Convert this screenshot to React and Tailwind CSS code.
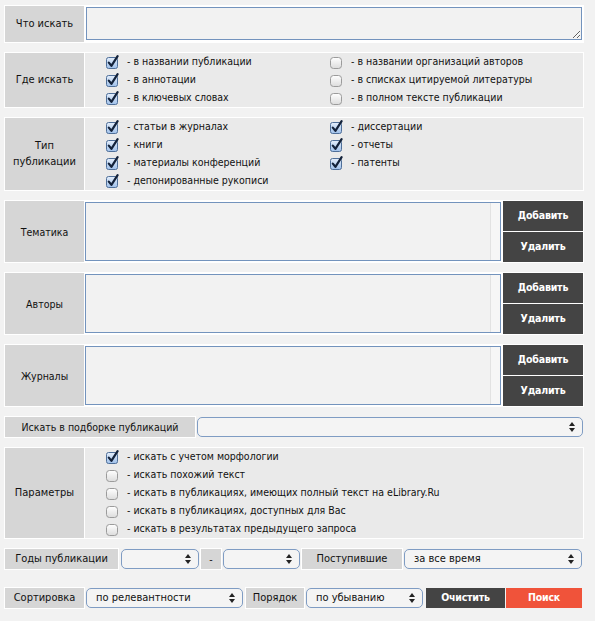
import React from 'react'

const FONT = { fontFamily: '"DejaVu Sans Condensed", "DejaVu Sans", sans-serif' }

function Check({ checked }) {
  if (checked) {
    return (
      <svg width="15" height="15" viewBox="0 0 15 15" className="shrink-0">
        <defs>
          <linearGradient id="cbOn" x1="0" y1="0" x2="0" y2="1">
            <stop offset="0" stopColor="#e4eefb" />
            <stop offset="1" stopColor="#9fc0ea" />
          </linearGradient>
        </defs>
        <rect x="0.5" y="2.5" width="11" height="11" rx="2" fill="url(#cbOn)" stroke="#4f6f99" />
        <path d="M2.8 7.6 L5.4 10.8 L11.6 1.2" fill="none" stroke="#13223a" strokeWidth="2.2" strokeLinecap="round" strokeLinejoin="round" />
      </svg>
    )
  }
  return (
    <svg width="15" height="15" viewBox="0 0 15 15" className="shrink-0">
      <defs>
        <linearGradient id="cbOff" x1="0" y1="0" x2="0" y2="1">
          <stop offset="0" stopColor="#ffffff" />
          <stop offset="1" stopColor="#dcdcdc" />
        </linearGradient>
      </defs>
      <rect x="0.5" y="2.5" width="11" height="11" rx="3" fill="url(#cbOff)" stroke="#9b9b9b" />
    </svg>
  )
}

function Item({ checked, children }) {
  return (
    <div className="flex items-center h-[18px] whitespace-nowrap">
      <Check checked={checked} />
      <span className="ml-[6px]">{children}</span>
    </div>
  )
}

function Label({ children, className = '' }) {
  return (
    <div className={`bg-[#d6d6d6] flex items-center justify-center text-center leading-[16px] ${className}`}>
      {children}
    </div>
  )
}

function Arrows() {
  return (
    <svg width="6" height="10" viewBox="0 0 6 10" className="shrink-0">
      <path d="M3 0 L6 4 L0 4 Z" fill="#222" />
      <path d="M3 10 L6 6 L0 6 Z" fill="#222" />
    </svg>
  )
}

function Select({ value = '', className = '' }) {
  return (
    <div className={`h-[20px] flex items-center justify-between border border-[#7f9cc3] rounded-[5px] bg-[#f4f4f4] pl-[9px] pr-[7px] ${className}`}>
      <span className="truncate">{value}</span>
      <Arrows />
    </div>
  )
}

function ListRow({ label }) {
  return (
    <div className="flex border border-white bg-white gap-px mb-[9px]">
      <Label className="w-[79px] h-[61px]">{label}</Label>
      <div className="flex-1 flex">
        <div className="flex-1 my-[1px] border border-[#7393bd] bg-[#f2f2f2] flex justify-end">
          <div className="w-[10px] border-l border-[#e2e2e2] bg-[#f6f6f6]" />
        </div>
        <div className="w-[80px] ml-[2px] flex flex-col gap-px bg-white">
          <button className="h-[30px] bg-[#444444] text-white font-bold tracking-[-0.2px]">Добавить</button>
          <button className="h-[30px] bg-[#444444] text-white font-bold tracking-[-0.2px]">Удалить</button>
        </div>
      </div>
    </div>
  )
}

export default function App() {
  return (
    <div className="min-h-[621px] bg-[#f2f2f2] text-[10.5px] text-[#111] pt-[5px] pl-[4px]" style={FONT}>
      <div className="w-[580px]">
        {/* Что искать */}
        <div className="flex border border-white bg-white gap-px mb-[9px]">
          <Label className="w-[79px] h-[36px] text-[11px]">Что искать</Label>
          <div className="flex-1 p-px bg-white">
            <textarea className="block w-full h-[33px] border border-[#7393bd] bg-[#f2f2f2] resize-y outline-none" />
          </div>
        </div>

        {/* Где искать */}
        <div className="flex border border-white bg-white gap-px mb-[9px]">
          <Label className="w-[79px] h-[54px] text-[11px]">Где искать</Label>
          <div className="flex-1 bg-[#eaeaea] flex">
            <div className="w-[245px] pl-[21px]">
              <Item checked>- в названии публикации</Item>
              <Item checked>- в аннотации</Item>
              <Item checked>- в ключевых словах</Item>
            </div>
            <div>
              <Item>- в названии организаций авторов</Item>
              <Item>- в списках цитируемой литературы</Item>
              <Item>- в полном тексте публикации</Item>
            </div>
          </div>
        </div>

        {/* Тип публикации */}
        <div className="flex border border-white bg-white gap-px mb-[9px]">
          <Label className="w-[79px] h-[72px] text-[11px]">Тип<br />публикации</Label>
          <div className="flex-1 bg-[#eaeaea] flex">
            <div className="w-[245px] pl-[21px]">
              <Item checked>- статьи в журналах</Item>
              <Item checked>- книги</Item>
              <Item checked>- материалы конференций</Item>
              <Item checked>- депонированные рукописи</Item>
            </div>
            <div>
              <Item checked>- диссертации</Item>
              <Item checked>- отчеты</Item>
              <Item checked>- патенты</Item>
            </div>
          </div>
        </div>

        <ListRow label="Тематика" />
        <ListRow label="Авторы" />
        <ListRow label="Журналы" />

        {/* Искать в подборке */}
        <div className="flex items-center mb-[9px]">
          <Label className="w-[192px] h-[22px] border border-white">Искать в подборке публикаций</Label>
          <Select className="flex-1 ml-px mr-[1px]" />
        </div>

        {/* Параметры */}
        <div className="flex border border-white bg-white gap-px mb-[9px]">
          <Label className="w-[79px] h-[90px] text-[11px]">Параметры</Label>
          <div className="flex-1 bg-[#eaeaea] pl-[21px]">
            <Item checked>- искать с учетом морфологии</Item>
            <Item>- искать похожий текст</Item>
            <Item>- искать в публикациях, имеющих полный текст на eLibrary.Ru</Item>
            <Item>- искать в публикациях, доступных для Вас</Item>
            <Item>- искать в результатах предыдущего запроса</Item>
          </div>
        </div>

        {/* Годы публикации */}
        <div className="flex items-center mb-[17px]">
          <Label className="w-[115px] h-[22px] border border-white text-[11px]">Годы публикации</Label>
          <Select className="w-[78px] ml-[2px]" />
          <Label className="w-[22px] h-[22px] border border-white ml-px">-</Label>
          <Select className="w-[77px] ml-[1px]" />
          <Label className="w-[102px] h-[22px] border border-white ml-px text-[11px]">Поступившие</Label>
          <Select value="за все время" className="flex-1 ml-px mr-[2px] text-[11px]" />
        </div>

        {/* Сортировка */}
        <div className="flex items-center">
          <Label className="w-[81px] h-[22px] border border-white text-[11px]">Сортировка</Label>
          <Select value="по релевантности" className="w-[157px] ml-px text-[11px]" />
          <Label className="w-[60px] h-[22px] border border-white ml-[2px] text-[11px]">Порядок</Label>
          <Select value="по убыванию" className="w-[117px] ml-[1px] text-[11px]" />
          <button className="w-[79px] h-[20px] ml-[3px] bg-[#444444] text-white font-bold tracking-[-0.2px]">Очистить</button>
          <button className="w-[76px] h-[20px] ml-px bg-[#f0533a] text-white font-bold tracking-[-0.2px]">Поиск</button>
        </div>
      </div>
    </div>
  )
}
